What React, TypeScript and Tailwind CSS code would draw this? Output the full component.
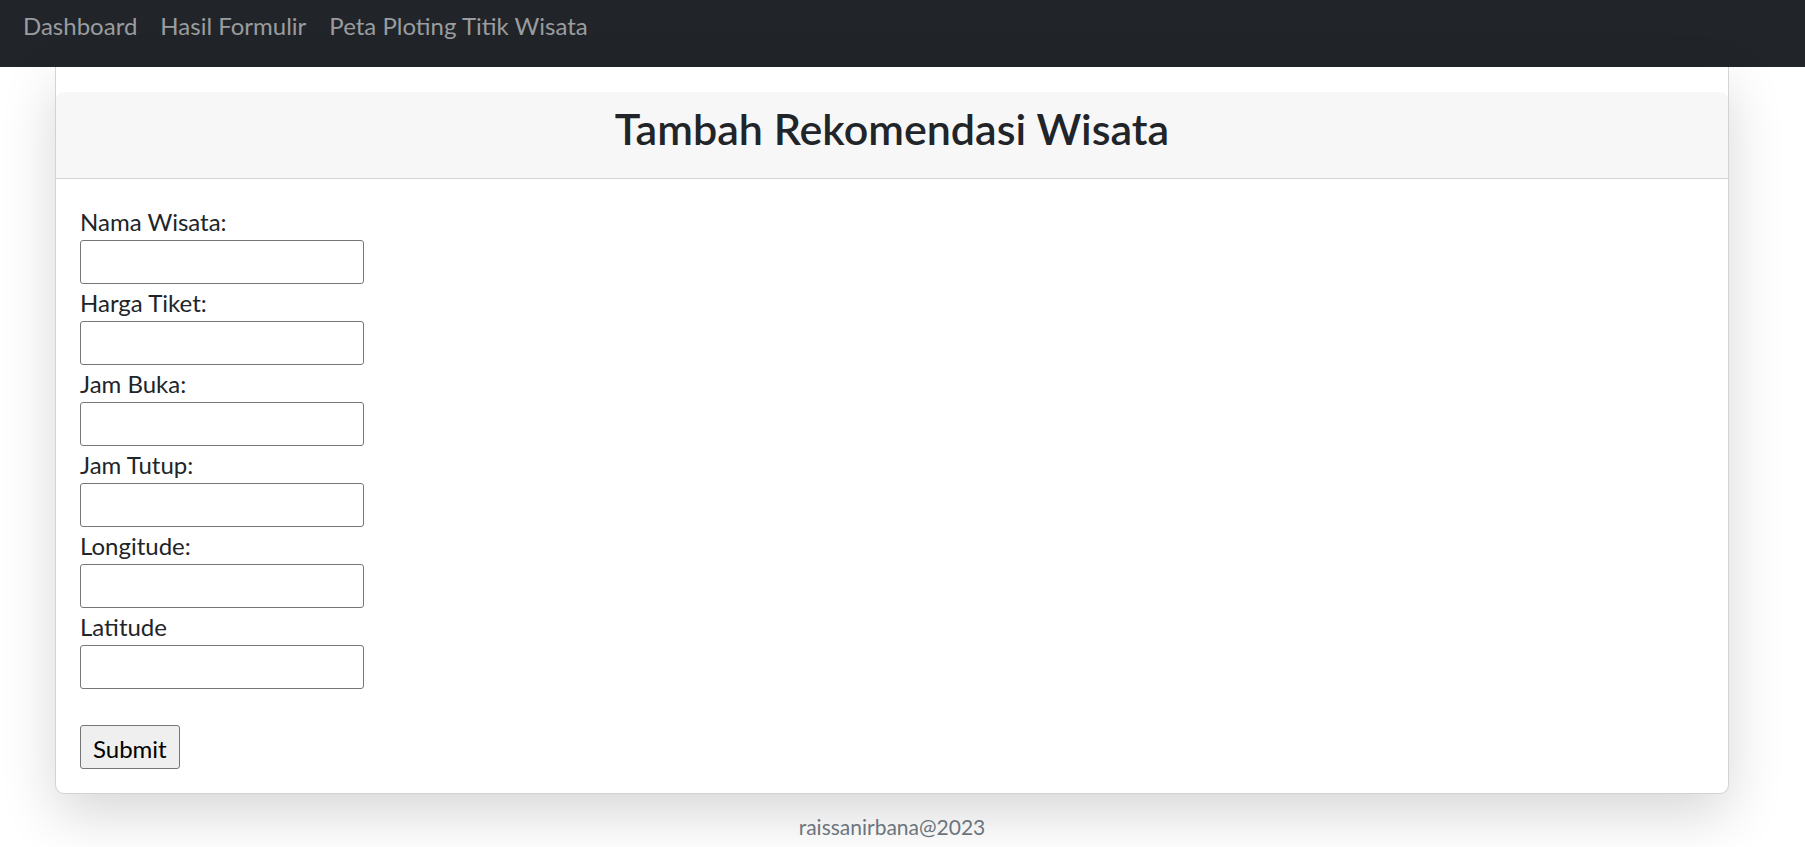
const navLinks = ["Dashboard", "Hasil Formulir", "Peta Ploting Titik Wisata"];

const fields = [
  { id: "nama", label: "Nama Wisata:" },
  { id: "harga", label: "Harga Tiket:" },
  { id: "buka", label: "Jam Buka:" },
  { id: "tutup", label: "Jam Tutup:" },
  { id: "longitude", label: "Longitude:" },
  { id: "latitude", label: "Latitude" },
];

function Navbar() {
  return (
    <nav className="h-[67px] bg-[#212529]">
      <ul className="flex gap-[23px] pl-[23px] pt-[8px]">
        {navLinks.map((link) => (
          <li key={link}>
            <a href="#" className="text-[24px] leading-[36px] text-[#9a9c9f]">
              {link}
            </a>
          </li>
        ))}
      </ul>
    </nav>
  );
}

export default function App() {
  return (
    <div className="min-h-screen bg-white font-['Lato',sans-serif] text-[#212529]">
      <Navbar />
      <div className="ml-[55px] w-[1674px]">
        {/* Kartu form */}
        <div className="rounded-b-[9px] border border-t-0 border-[#d3d3d3] bg-white pt-[25px] shadow-[0_20px_56px_rgba(0,0,0,0.16)]">
          <div className="h-[87px] rounded-t-[8px] border-b border-[#d3d3d3] bg-[#f7f7f7] pt-[11px] text-center">
            <h2 className="text-[43px] font-semibold leading-[1.2]">
              Tambah Rekomendasi Wisata
            </h2>
          </div>
          <form className="px-[24px] pt-[24px] pb-[24px]">
            {fields.map((f) => (
              <div key={f.id}>
                <label htmlFor={f.id} className="block h-[37px] text-[24px] leading-[37px]">
                  {f.label}
                </label>
                <input
                  id={f.id}
                  type="text"
                  className="block h-[44px] w-[284px] rounded-[3px] border border-[#767676] bg-white px-[3px] text-[24px]"
                />
              </div>
            ))}
            <div className="h-[36px]" />
            <button
              type="button"
              className="h-[44px] rounded-[3px] border border-[#767676] bg-[#efefef] px-[12px] pt-[4px] text-[24px] leading-none text-black"
            >
              Submit
            </button>
          </form>
        </div>
        {/* Footer */}
        <footer className="mt-[18px] text-center text-[21px] leading-[30px] text-[#6c757d]">
          raissanirbana@2023
        </footer>
      </div>
    </div>
  );
}
